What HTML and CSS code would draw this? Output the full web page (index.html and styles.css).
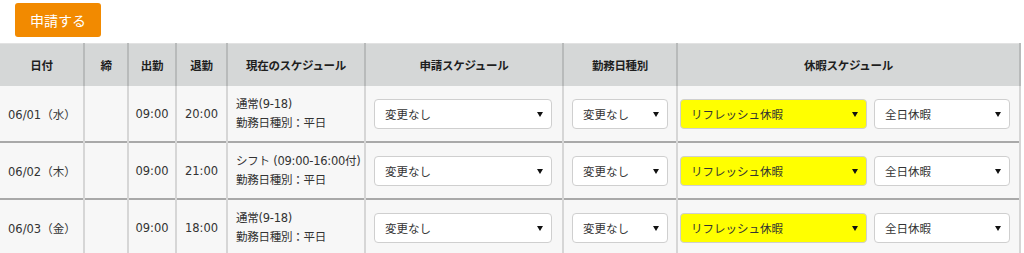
FILE: index.html
```html
<!DOCTYPE html>
<html>

<head>
    <title>休暇申請</title>
    <link rel="stylesheet" href="styles.css">
</head>

<body>

    <div class="toolbar">
        <button class="apply-btn">申請する</button>
    </div>

    <table class="schedule">
        <colgroup>
            <col style="width: 84px">
            <col style="width: 44px">
            <col style="width: 48px">
            <col style="width: 51px">
            <col style="width: 138px">
            <col style="width: 198px">
            <col style="width: 114px">
            <col>
        </colgroup>
        <thead>
            <tr>
                <th>日付</th>
                <th>締</th>
                <th>出勤</th>
                <th>退勤</th>
                <th>現在のスケジュール</th>
                <th>申請スケジュール</th>
                <th>勤務日種別</th>
                <th>休暇スケジュール</th>
            </tr>
        </thead>
        <tbody>
            <tr>
                <td class="date">06/01（水）</td>
                <td></td>
                <td class="time">09:00</td>
                <td class="time">20:00</td>
                <td class="current">通常(9-18)<br>勤務日種別：平日</td>
                <td><span class="select wide"><select><option>変更なし</option></select></span></td>
                <td><span class="select"><select><option>変更なし</option></select></span></td>
                <td class="leave">
                    <div class="leave-pair">
                        <span class="select leave-type"><select><option>リフレッシュ休暇</option></select></span>
                        <span class="select leave-span"><select><option>全日休暇</option></select></span>
                    </div>
                </td>
            </tr>
            <tr>
                <td class="date">06/02（木）</td>
                <td></td>
                <td class="time">09:00</td>
                <td class="time">21:00</td>
                <td class="current">シフト (09:00-16:00付)<br>勤務日種別：平日</td>
                <td><span class="select wide"><select><option>変更なし</option></select></span></td>
                <td><span class="select"><select><option>変更なし</option></select></span></td>
                <td class="leave">
                    <div class="leave-pair">
                        <span class="select leave-type"><select><option>リフレッシュ休暇</option></select></span>
                        <span class="select leave-span"><select><option>全日休暇</option></select></span>
                    </div>
                </td>
            </tr>
            <tr>
                <td class="date">06/03（金）</td>
                <td></td>
                <td class="time">09:00</td>
                <td class="time">18:00</td>
                <td class="current">通常(9-18)<br>勤務日種別：平日</td>
                <td><span class="select wide"><select><option>変更なし</option></select></span></td>
                <td><span class="select"><select><option>変更なし</option></select></span></td>
                <td class="leave">
                    <div class="leave-pair">
                        <span class="select leave-type"><select><option>リフレッシュ休暇</option></select></span>
                        <span class="select leave-span"><select><option>全日休暇</option></select></span>
                    </div>
                </td>
            </tr>
        </tbody>
    </table>

</body>

</html>
```

FILE: styles.css
```css
body {
    margin: 0;
    font-family: "DejaVu Sans", "Noto Sans CJK JP", sans-serif;
    font-size: 11.5px;
    color: #333;
    background-color: #fff;
}

.toolbar {
    padding: 3px 0 6px 15px;
}

.apply-btn {
    width: 86px;
    height: 34px;
    font-family: "Noto Sans CJK JP", sans-serif;
    font-size: 14px;
    color: #fff;
    background-color: #f28a00;
    border: none;
    border-radius: 3px;
    cursor: pointer;
}

.schedule {
    width: 1021px;
    table-layout: fixed;
    border-collapse: collapse;
}

.schedule th {
    height: 42px;
    padding: 0;
    font-family: "Noto Sans CJK JP", sans-serif;
    font-size: 11.5px;
    font-weight: bold;
    letter-spacing: -0.3px;
    color: #1e1e1e;
    background-color: #d5d7d7;
    border-left: 2px solid #b8baba;
    border-top: 1px solid #e2e2e2;
}

.schedule th:first-child {
    border-left: none;
}

.schedule th:last-child {
    border-right: 2px solid #b8baba;
}

.schedule td {
    height: 55px;
    padding: 0 8px;
    background-color: #f7f7f7;
    border-left: 2px solid #d6d6d6;
    border-top: 2px solid #a9a9a9;
    vertical-align: middle;
}

.schedule tbody tr:first-child td {
    border-top: none;
}

.schedule td:first-child {
    border-left: none;
}

.schedule td:last-child {
    border-right: 2px solid #d6d6d6;
}

.schedule td.time {
    text-align: center;
    padding: 0;
}

.schedule td.current {
    line-height: 19px;
    letter-spacing: -0.25px;
    white-space: nowrap;
}

.schedule td.leave {
    padding: 0 8px 0 2px;
}

.leave-pair {
    display: flex;
    gap: 7px;
}

/* Dropdowns */
.select {
    position: relative;
    display: inline-block;
    vertical-align: middle;
    width: 96px;
}

.select.wide {
    width: 178px;
}

.select.leave-type {
    width: 187px;
}

.select.leave-span {
    width: 136px;
}

.select select {
    appearance: none;
    -webkit-appearance: none;
    width: 100%;
    height: 30px;
    padding: 0 24px 0 10px;
    font-family: "Noto Sans CJK JP", sans-serif;
    font-size: 11.5px;
    color: #333;
    background-color: #fff;
    border: 1px solid #cfcfcf;
    border-radius: 4px;
}

.leave-type select {
    background-color: #ffff00;
}

.select::after {
    content: "";
    position: absolute;
    right: 9px;
    top: 13px;
    border-left: 3.5px solid transparent;
    border-right: 3.5px solid transparent;
    border-top: 5px solid #111;
    pointer-events: none;
}
```
